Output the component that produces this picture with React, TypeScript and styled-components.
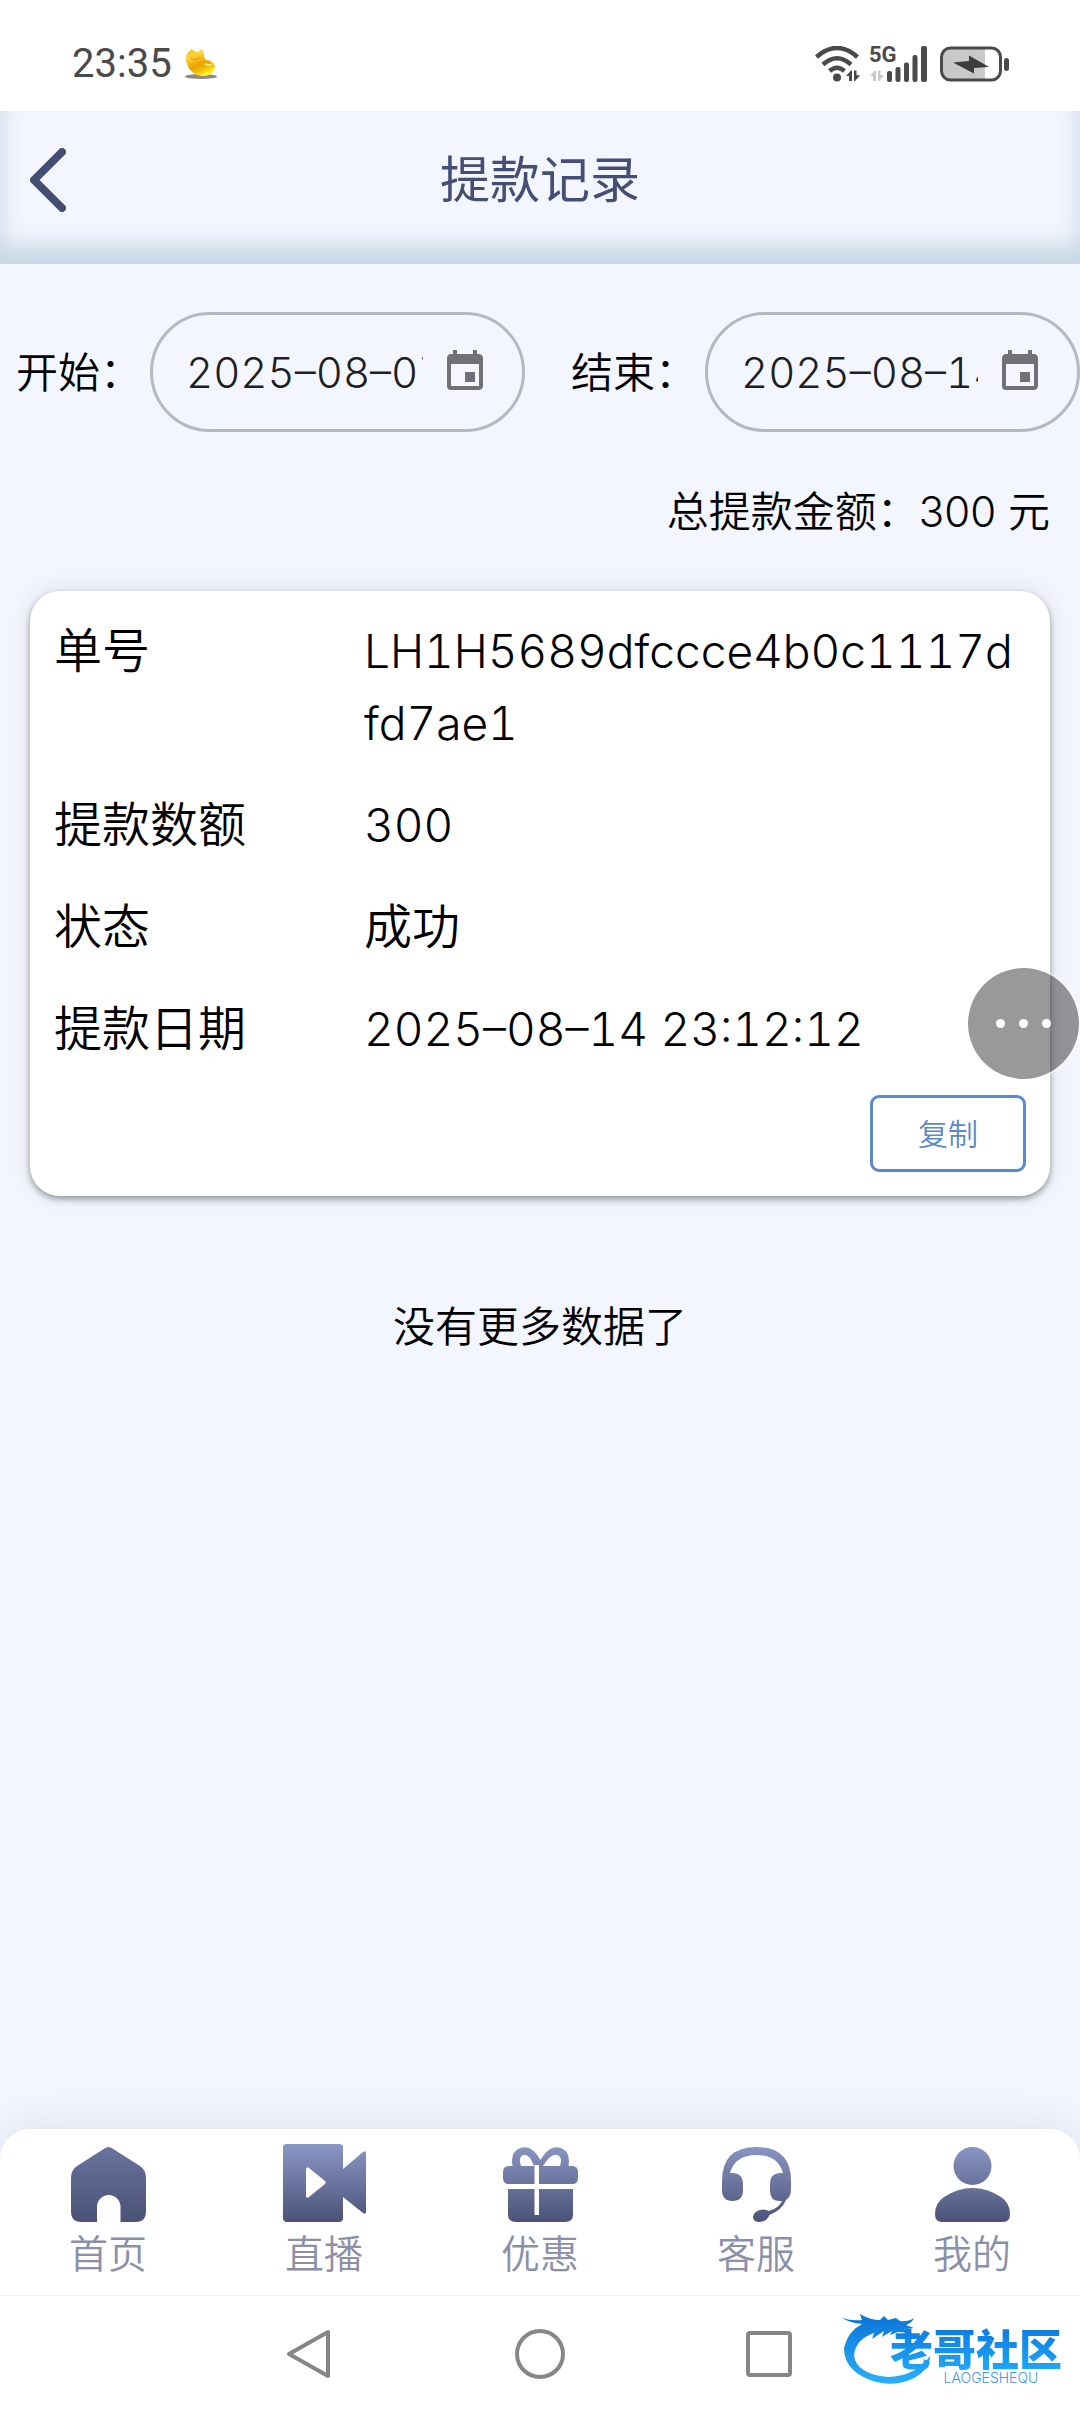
import React from 'react';
import styled, { createGlobalStyle } from 'styled-components';
import { MdEvent } from 'react-icons/md';

const GlobalStyle = createGlobalStyle`
  * { box-sizing: border-box; }
  body {
    margin: 0;
    background: #f3f6fe;
    color: #000;
    font-family: Inter, "Noto Sans CJK SC", sans-serif;
    font-size: 42px;
    font-weight: 350;
    line-height: 63px;
  }
  button, input { font: inherit; }
`;

const Screen = styled.div`
  position: relative;
  display: flex;
  flex-direction: column;
  min-height: 100vh;
  overflow-x: hidden;
`;

const StatusBar = styled.div`
  display: flex;
  align-items: center;
  justify-content: space-between;
  height: 111px;
  padding: 16px 70px 0 72px;
  background: #fff;
  color: #4a4a4a;
`;

const StatusGroup = styled.div<{ $gap: number }>`
  display: flex;
  align-items: center;
  gap: ${(p) => p.$gap}px;
`;

const Clock = styled.time`
  font-family: Roboto, sans-serif;
  font-size: 40px;
  font-weight: 400;
  line-height: 48px;
`;

const Header = styled.header`
  display: grid;
  grid-template-columns: 100px 1fr 100px;
  align-items: center;
  height: 153px;
  padding-bottom: 15px;
  box-shadow: inset 0 -19px 24px #c8d7e6;
  color: #454e73;
`;

const BackButton = styled.button`
  display: flex;
  align-items: center;
  height: 100%;
  padding: 0 0 0 30px;
  border: 0;
  background: none;
  color: inherit;
`;

const Title = styled.h1`
  margin: 0;
  font-size: 50px;
  font-weight: 400;
  line-height: 72px;
  text-align: center;
`;

const Main = styled.main`
  flex: 1;
`;

const Filters = styled.form`
  display: flex;
  gap: 46px;
  padding: 48px 0 0 16px;
`;

const Field = styled.label`
  display: flex;
  flex: 1;
  align-items: center;
  gap: 8px;
  min-width: 0;
  white-space: nowrap;
`;

const DatePill = styled.span`
  display: flex;
  flex: 1;
  align-items: center;
  gap: 18px;
  min-width: 0;
  height: 120px;
  padding: 0 33px;
  border: 3px solid #b5b8c2;
  border-radius: 60px;
  color: #6f7177;
`;

const DateInput = styled.input`
  flex: 1;
  min-width: 0;
  padding: 0;
  border: 0;
  outline: 0;
  background: none;
  color: #1d1f23;
  font-variant-numeric: tabular-nums;
`;

const Total = styled.p`
  margin: 48px 30px;
  text-align: right;
`;

const Card = styled.article`
  margin: 0 30px;
  padding: 24px;
  border-radius: 30px;
  background: #fff;
  box-shadow: 0 3px 6px rgba(0, 0, 0, 0.36), 0 0 24px rgba(0, 0, 0, 0.1);
`;

const Details = styled.dl`
  display: grid;
  grid-template-columns: 310px 1fr;
  row-gap: 30px;
  margin: 0 0 30px;
  font-size: 48px;
  line-height: 72px;
`;

const Term = styled.dt`
  margin: 0;
`;

const Value = styled.dd<{ $numeric: boolean }>`
  margin: 0;
  font-size: ${(p) => (p.$numeric ? 46 : 48)}px;
  font-variant-numeric: tabular-nums;
  word-break: break-all;
`;

const CopyButton = styled.button`
  display: block;
  width: 156px;
  height: 77px;
  margin-left: auto;
  padding: 0;
  border: 3px solid #5b8acb;
  border-radius: 9px;
  background: #fff;
  color: #5b8acb;
  font-size: 30px;
  line-height: 42px;
`;

const EndNote = styled.p`
  margin: 99px 0 48px;
  text-align: center;
`;

const FloatingButton = styled.button`
  position: absolute;
  top: 968px;
  right: 1px;
  display: flex;
  align-items: center;
  justify-content: center;
  gap: 14px;
  width: 111px;
  height: 111px;
  padding: 0;
  border: 0;
  border-radius: 50%;
  background: rgba(0, 0, 0, 0.4);
  box-shadow: 0 0 0 2px rgba(255, 255, 255, 0.5);
`;

const Dot = styled.span`
  width: 9px;
  height: 9px;
  border-radius: 50%;
  background: #fff;
`;

const TabBar = styled.nav`
  display: grid;
  grid-template-columns: repeat(5, 1fr);
  height: 166px;
  border-radius: 30px 30px 0 0;
  background: #fff;
  box-shadow: 0 0 45px rgba(0, 0, 0, 0.1);
`;

const Tab = styled.a`
  display: flex;
  flex-direction: column;
  align-items: center;
  gap: 3px;
  padding-top: 14px;
  color: #8b8fa8;
  font-size: 39px;
  line-height: 56px;
  text-decoration: none;
`;

const SystemNav = styled.div`
  position: relative;
  display: flex;
  align-items: center;
  justify-content: center;
  gap: 180px;
  height: 117px;
  border-top: 1px solid #f0f1f3;
  background: #fff;
`;

const SystemButton = styled.button`
  display: flex;
  width: 50px;
  height: 50px;
  padding: 0;
  border: 0;
  background: none;
`;

const Watermark = styled.div`
  position: absolute;
  right: 14px;
  bottom: 24px;
  display: flex;
  flex-direction: column;
  align-items: center;
  width: 224px;
  height: 78px;
  padding: 14px 0 0 44px;
  color: #3f97e0;
`;

const WatermarkArt = styled.svg`
  position: absolute;
  left: 0;
  top: 0;
`;

const WatermarkName = styled.span`
  position: relative;
  font-family: "Noto Sans CJK SC", sans-serif;
  font-size: 43px;
  font-weight: 900;
  line-height: 46px;
  background: linear-gradient(#0a78dc, #1fa6f8);
  background-clip: text;
  color: transparent;
`;

const WatermarkSub = styled.span`
  position: relative;
  margin-left: 30px;
  font-size: 14px;
  line-height: 16px;
`;

function Bean() {
  return (
    <svg width="34" height="34" viewBox="0 0 34 34" aria-hidden="true">
      <defs>
        <linearGradient id="bean" x1="0" y1="0" x2="0.500" y2="1">
          <stop offset="0" stopColor="#f3bd0c" />
          <stop offset="0.300" stopColor="#ffd33a" />
          <stop offset="0.650" stopColor="#e9a200" />
          <stop offset="0.850" stopColor="#f6c000" />
          <stop offset="1" stopColor="#fff02e" />
        </linearGradient>
      </defs>
      <ellipse cx="17" cy="29.500" rx="16" ry="2.500" fill="#8b8a88" />
      <path d="M8 2 Q1 6 2 14 Q4 24 13 28 Q24 31 29 25 Q33 19 29 16 Q25 13 23 13 Q21 14 20 9 Q20 4 17 2 Q16 5 13 5 Q10 5 8 2Z" fill="url(#bean)" />
      <path d="M6 10 Q11 15 16 10" fill="none" stroke="#d79a00" strokeWidth="1" />
      <path d="M21 17 Q25 19 28 17" fill="none" stroke="#fff6b0" strokeWidth="1.500" />
    </svg>
  );
}

function Wifi() {
  return (
    <svg width="46" height="36" viewBox="0 0 46 36" aria-hidden="true">
      <g fill="none" stroke="#4a4a4a" strokeWidth="4.5">
        <path d="M1.5 11 Q22 -7 42.500 11" />
        <path d="M8 18.500 Q22 6 36 18.500" />
        <path d="M14.500 25 Q22 18.500 29.500 25" />
      </g>
      <circle cx="22" cy="31.500" r="4" fill="#4a4a4a" />
      <path d="M31 30 L36 24.500 H37 V35 H34 V30Z M39 24.500 H41.500 V29 L45 29.500 L40 35 H39Z" fill="#4a4a4a" />
    </svg>
  );
}

const NetLabel = styled.span`
  position: absolute;
  left: 0;
  top: 0;
  font-family: Roboto, sans-serif;
  font-size: 22px;
  font-weight: 700;
  line-height: 18px;
`;

const SignalBox = styled.span`
  position: relative;
  display: flex;
  margin-left: -4px;
`;

function Signal() {
  return (
    <SignalBox>
      <NetLabel>5G</NetLabel>
      <svg width="59" height="36" viewBox="0 0 59 36" aria-hidden="true">
        <path d="M1 30 L6 24.500 H7 V35 H4 V30Z M9 24.500 H11.500 V29 L15 29.500 L10 35 H9Z" fill="#c8c8c8" />
        <g fill="#4a4a4a">
          <rect x="18" y="25" width="5" height="11" rx="2" />
          <rect x="26.500" y="21" width="5" height="15" rx="2" />
          <rect x="35" y="16.500" width="5" height="19.500" rx="2" />
          <rect x="43.500" y="9" width="5" height="27" rx="2" />
          <rect x="52" y="0" width="6" height="36" rx="2" />
        </g>
      </svg>
    </SignalBox>
  );
}

function Battery() {
  return (
    <svg width="70" height="36" viewBox="0 0 70 36" aria-hidden="true">
      <path d="M10 2 H45 V34 H10 Q2 34 2 26 V10 Q2 2 10 2Z" fill="#c8c8c8" />
      <rect x="1.500" y="2" width="59" height="32" rx="9" fill="none" stroke="#4a4a4a" strokeWidth="3" />
      <rect x="64" y="12" width="5" height="13" rx="2.500" fill="#4a4a4a" />
      <path d="M13 16.500 L29 15 V9.500 L49 21 L34 22 V27.500Z" fill="#3c3c3c" />
    </svg>
  );
}

function BackIcon() {
  return (
    <svg width="36" height="64" viewBox="0 0 36 64" aria-hidden="true">
      <path d="M32 4 L4 32 L32 60" fill="none" stroke="currentColor" strokeWidth="8" strokeLinecap="round" strokeLinejoin="round" />
    </svg>
  );
}

type IconName = 'home' | 'live' | 'gift' | 'service' | 'me';

const tabShapes: Record<IconName, React.ReactNode> = {
  home: (
    <path d="M33.500 5.500 Q37.500 2.500 41.500 5.500 L69 23 Q75 27 75 35 V68 Q75 79 65 79 H49.500 V64 A11.750 12 0 0 0 26 64 V79 H10 Q0 79 0 68 V35 Q0 27 6 23Z" />
  ),
  live: (
    <path
      fillRule="evenodd"
      d="M0 4 Q0 1 4 1 H56 Q60 1 60 4 V26 L80 9 Q83 7 83 10 V69 Q83 72 80 70 L60 54 V75 Q60 79 56 79 H4 Q0 79 0 75Z M23 27 V53 Q23 56 26 54 L42 41 Q43.500 39.500 42 38 L26 25 Q23 23 23 27Z"
    />
  ),
  gift: (
    <>
      <path
        fillRule="evenodd"
        d="M9.500 23 Q7 9 17 5 Q29 1 37.500 17 Q46 1 58 5 Q68 9 65.500 23 H69 Q75 23 75 29 V35 Q75 41 69 41 H36 V22 H31.500 V41 H6 Q0 41 0 35 V29 Q0 23 6 23Z M18 23 H31 Q26 10 20 12 Q15 15 18 23Z M40 23 H57 Q60 14 54 12 Q48 10 40 23Z"
      />
      <path d="M5 46 H31.500 V72 H36 V46 H70 V72 Q70 79 62 79 H13 Q5 79 5 72Z" />
    </>
  ),
  service: (
    <path
      fillRule="evenodd"
      d="M0 38 Q0 4 34.500 4 Q69 4 69 38 V46 Q69 54 64 57 Q60 67 47.500 72 Q45 79 36 79 Q31 78 31 74 Q32 67 41 66.500 Q45 66.500 47 68 Q57 65 60 58 Q48 59 48 48 V41 Q48 29 61 30 Q56 12 34.500 12 Q13 12 8 30 Q21 29 21 41 V47 Q21 58 10.500 58 Q0 58 0 47Z"
    />
  ),
  me: (
    <>
      <circle cx="37.500" cy="23" r="19" />
      <path d="M37.500 45 Q52 45 66 54 Q75 60 75 71 Q75 79 68 79 H7 Q0 79 0 71 Q0 60 9 54 Q23 45 37.500 45Z" />
    </>
  ),
};

const tabWidths: Record<IconName, number> = { home: 75, live: 83, gift: 75, service: 69, me: 75 };

function TabIcon({ name }: { name: IconName }) {
  const id = `tab-${name}`;
  return (
    <svg width={tabWidths[name]} height="80" viewBox={`0 0 ${tabWidths[name]} 80`} aria-hidden="true">
      <defs>
        <linearGradient id={id} gradientUnits="userSpaceOnUse" x1="0" y1="0" x2="0" y2="79">
          <stop offset="0" stopColor={name === 'home' ? '#6a759f' : '#8b98c6'} />
          <stop offset="1" stopColor="#4b5276" />
        </linearGradient>
      </defs>
      <g fill={`url(#${id})`}>{tabShapes[name]}</g>
    </svg>
  );
}

function Dragon() {
  return (
    <WatermarkArt width="120" height="78" viewBox="0 0 120 78" aria-hidden="true">
      <defs>
        <linearGradient id="dragon" x1="0" y1="0" x2="0" y2="1">
          <stop offset="0" stopColor="#0a74d6" />
          <stop offset="1" stopColor="#28b0fb" />
        </linearGradient>
      </defs>
      <path
        fill="url(#dragon)"
        d="M0 8 Q9 11 20 10 L18 4 Q28 10 38 10 L42 6 L46 10 L54 8 L58 11 Q66 12 72 8 Q70 13 64 15 L72 18 L62 19 L70 23 L56 22 L48 25 L50 21 L40 27 L42 21 L30 29 L32 23 Q14 29 12 45 Q14 64 46 67 Q74 66 88 46 Q88 60 70 69 Q50 78 28 70 Q2 60 2 38 Q6 21 20 14 Q8 13 0 8Z"
      />
    </WatermarkArt>
  );
}

const tabs: { name: IconName; label: string }[] = [
  { name: 'home', label: '首页' },
  { name: 'live', label: '直播' },
  { name: 'gift', label: '优惠' },
  { name: 'service', label: '客服' },
  { name: 'me', label: '我的' },
];

const record = [
  { term: '单号', value: 'LH1H5689dfccce4b0c1117dfd7ae1', numeric: true },
  { term: '提款数额', value: '300', numeric: true },
  { term: '状态', value: '成功', numeric: false },
  { term: '提款日期', value: '2025–08–14 23:12:12', numeric: true },
];

function DateField({ label, value }: { label: string; value: string }) {
  return (
    <Field>
      {label}
      <DatePill>
        <DateInput type="text" defaultValue={value} />
        <MdEvent size={48} />
      </DatePill>
    </Field>
  );
}

export default function App() {
  return (
    <Screen lang="zh-CN">
      <GlobalStyle />
      <StatusBar>
        <StatusGroup $gap={12}>
          <Clock>23:35</Clock>
          <Bean />
        </StatusGroup>
        <StatusGroup $gap={12}>
          <Wifi />
          <Signal />
          <Battery />
        </StatusGroup>
      </StatusBar>

      <Header>
        <BackButton type="button" aria-label="返回">
          <BackIcon />
        </BackButton>
        <Title>提款记录</Title>
      </Header>

      <Main>
        <Filters>
          <DateField label="开始：" value="2025–08–07" />
          <DateField label="结束：" value="2025–08–14" />
        </Filters>
        <Total>总提款金额：300 元</Total>
        <Card>
          <Details>
            {record.map((row) => (
              <React.Fragment key={row.term}>
                <Term>{row.term}</Term>
                <Value $numeric={row.numeric}>{row.value}</Value>
              </React.Fragment>
            ))}
          </Details>
          <CopyButton type="button">复制</CopyButton>
        </Card>
        <EndNote>没有更多数据了</EndNote>
      </Main>

      <FloatingButton type="button" aria-label="更多">
        <Dot />
        <Dot />
        <Dot />
      </FloatingButton>

      <TabBar>
        {tabs.map((tab) => (
          <Tab key={tab.name} href={`#${tab.name}`}>
            <TabIcon name={tab.name} />
            {tab.label}
          </Tab>
        ))}
      </TabBar>

      <SystemNav>
        <SystemButton type="button" aria-label="后退">
          <svg width="50" height="50" viewBox="0 0 50 50" fill="none" stroke="#868686" strokeWidth="4" strokeLinejoin="round">
            <path d="M43 3 V47 L4 25Z" />
          </svg>
        </SystemButton>
        <SystemButton type="button" aria-label="主屏幕">
          <svg width="50" height="50" viewBox="0 0 50 50" fill="none" stroke="#868686" strokeWidth="4">
            <circle cx="25" cy="25" r="23" />
          </svg>
        </SystemButton>
        <SystemButton type="button" aria-label="最近任务">
          <svg width="50" height="50" viewBox="0 0 50 50" fill="none" stroke="#868686" strokeWidth="4">
            <rect x="3" y="4" width="42" height="42" rx="2" />
          </svg>
        </SystemButton>
        <Watermark>
          <Dragon />
          <WatermarkName>老哥社区</WatermarkName>
          <WatermarkSub>LAOGESHEQU</WatermarkSub>
        </Watermark>
      </SystemNav>
    </Screen>
  );
}
